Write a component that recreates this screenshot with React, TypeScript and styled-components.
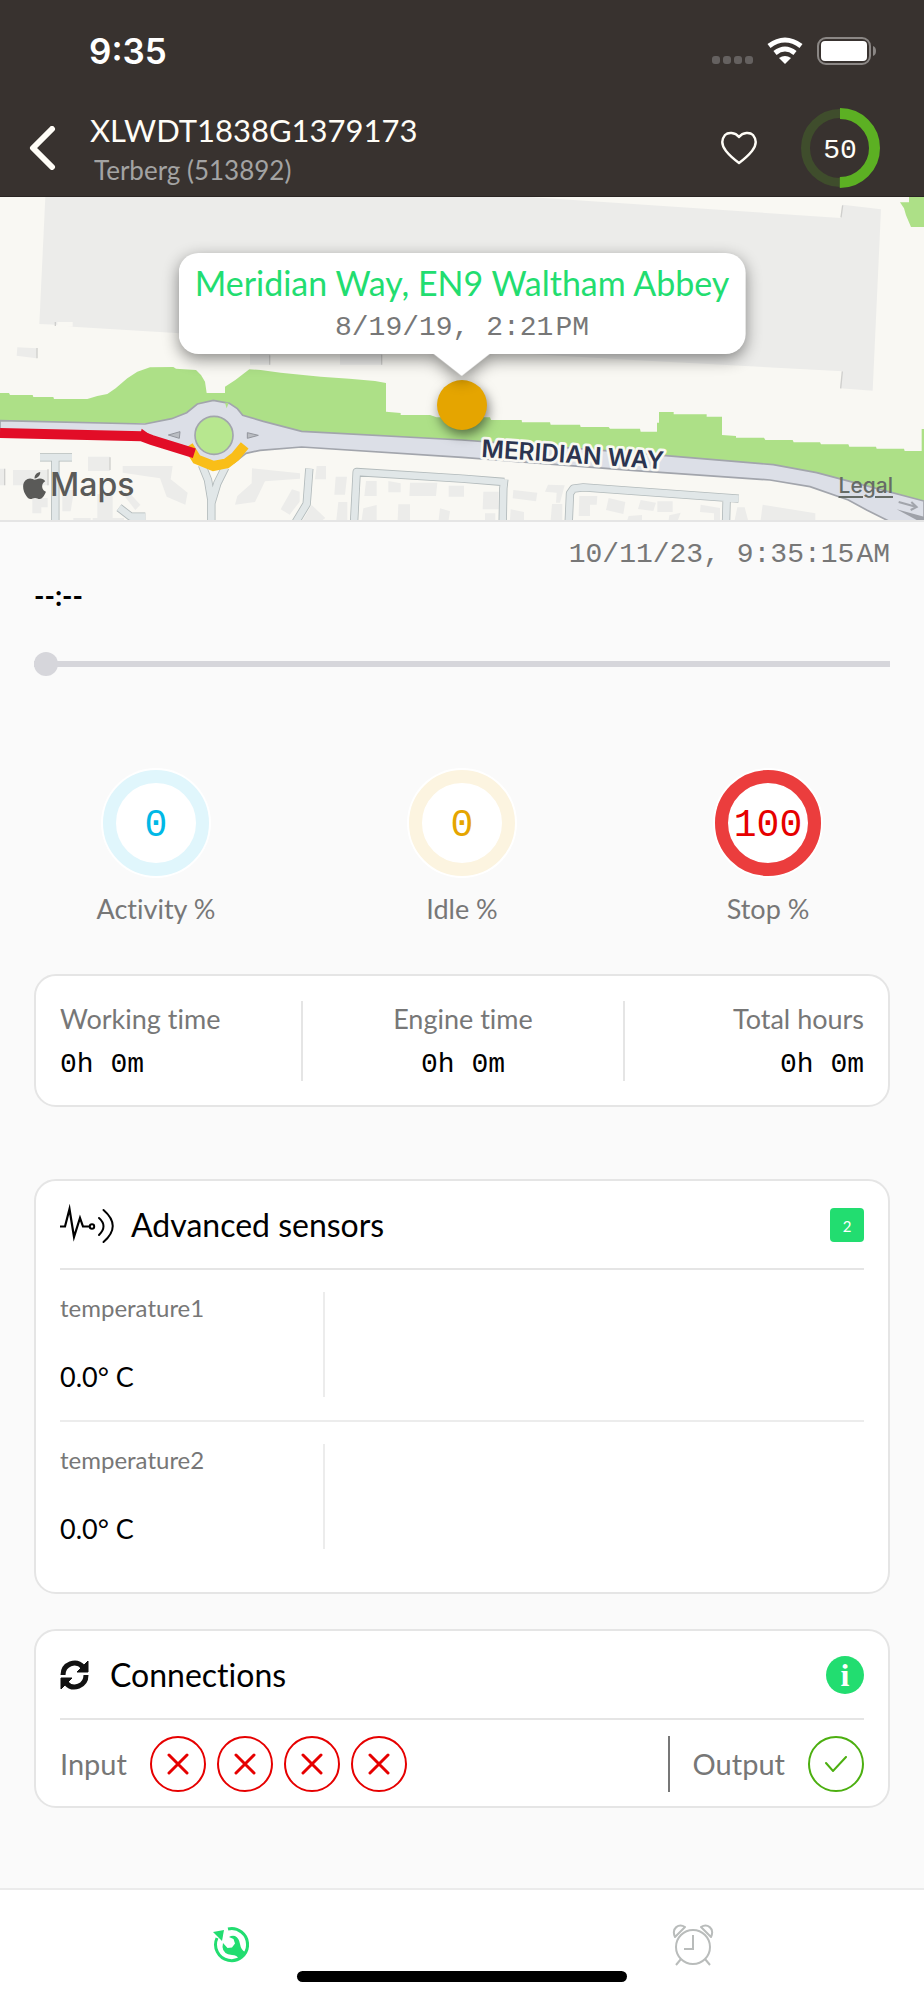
import React from "react";
import styled, { createGlobalStyle } from "styled-components";
import { FaApple } from "react-icons/fa";

const sans = `Lato, "Open Sans", sans-serif`;
const mono = `"Liberation Mono", monospace`;
const system = `Inter, Roboto, sans-serif`;

const c = {
  dark: "#38322f",
  page: "#fafafa",
  line: "#e5e5e5",
  soft: "#ececec",
  muted: "#777777",
  green: "#22dd70",
  red: "#e60000",
};

const GlobalStyle = createGlobalStyle`
  *, *::before, *::after { box-sizing: border-box; }
  html, body { margin: 0; background: ${c.page}; }
  body { font-family: ${sans}; color: #000; font-variant-ligatures: none; -webkit-font-smoothing: antialiased; }
  h1, h2, p, dl, dt, dd, ul { margin: 0; padding: 0; font-weight: 400; }
  button { border: 0; padding: 0; background: none; cursor: pointer; color: inherit; display: flex; align-items: center; justify-content: center; }
  svg { display: block; }
`;

const Page = styled.div`
  min-height: 100vh;
  display: flex;
  flex-direction: column;
`;

const Header = styled.header`
  background: ${c.dark};
  color: #fffdf7;
  border-bottom: 1px solid #2a2523;
`;

const StatusBar = styled.div`
  height: 102px;
  padding: 0 48px 0 89px;
  display: flex;
  align-items: center;
  justify-content: space-between;
  font: 600 35px/36px ${system};
  color: #fff;
`;

const StatusIcons = styled.div`
  display: flex;
  align-items: center;
  gap: 13px;
`;

const TitleBar = styled.div`
  height: 94px;
  display: flex;
  align-items: center;
  padding: 0 44px 2px 28px;
`;

const BackButton = styled.button`
  width: 28px;
  height: 48px;
`;

const Titles = styled.div`
  flex: 1;
  padding-left: 34px;
`;

const MachineName = styled.h1`
  font-size: 31px;
  line-height: 44px;
`;

const MachineModel = styled.p`
  font-size: 26px;
  line-height: 36px;
  padding-left: 4px;
  color: #a3a3a3;
`;

const FavoriteButton = styled.button`
  width: 40px;
  height: 48px;
  margin-right: 41px;
`;

const DialWrap = styled.div<{ $size: number }>`
  display: grid;
  place-items: center;
  width: ${(p) => p.$size}px;
  height: ${(p) => p.$size}px;
  > * { grid-area: 1 / 1; }
`;

const DialValue = styled.span<{ $color: string; $big?: boolean }>`
  font-family: ${mono};
  font-size: ${(p) => (p.$big ? 38 : 28)}px;
  line-height: 40px;
  padding-top: 6px;
  color: ${(p) => p.$color};
`;

const MapArea = styled.section`
  position: relative;
  height: 325px;
  border-bottom: 2px solid ${c.line};
  background: #f9f8f3;
  overflow: hidden;
`;

const MapCanvas = styled.svg`
  width: 100%;
  height: 100%;
`;

const Callout = styled.div`
  position: absolute;
  top: 56px;
  left: 50%;
  transform: translateX(-50%);
  height: 101px;
  padding: 6px 16px;
  border-radius: 20px;
  background: #fff;
  text-align: center;
  white-space: nowrap;
  filter: drop-shadow(0 5px 8px rgba(0, 0, 0, 0.45));
  &::after {
    content: "";
    position: absolute;
    top: 100%;
    left: 50%;
    margin-left: -28px;
    border: 28px solid transparent;
    border-top: 22px solid #fff;
    border-bottom: 0;
  }
`;

const Address = styled.p`
  font-size: 34px;
  line-height: 48px;
  color: ${c.green};
`;

const Stamp = styled.p`
  font-family: ${mono};
  font-size: 28px;
  line-height: 42px;
  color: ${c.muted};
`;

const Meridiem = styled.span`
  margin-left: 2px;
`;

const Pin = styled.span`
  position: absolute;
  top: 183px;
  left: 50%;
  width: 50px;
  height: 50px;
  margin-left: -25px;
  border-radius: 50%;
  background: #e5a500;
  box-shadow: 2px 5px 12px rgba(0, 0, 0, 0.5);
`;

const MapBrand = styled.div`
  position: absolute;
  left: 19px;
  bottom: 15px;
  display: flex;
  align-items: center;
  font: 500 32px/40px ${system};
  color: #5a5a58;
`;

const LegalLink = styled.a`
  position: absolute;
  right: 31px;
  bottom: 20px;
  font: 500 21px/28px ${system};
  color: #666b66;
  text-decoration: underline;
  text-decoration-thickness: 2px;
  text-underline-offset: 3px;
`;

const Main = styled.main`
  flex: 1;
  padding: 12px 34px 80px;
  display: flex;
  flex-direction: column;
`;

const CurrentTime = styled(Stamp)`
  text-align: right;
`;

const Elapsed = styled.label`
  font-size: 28px;
  font-weight: 700;
  line-height: 38px;
`;

const Slider = styled.input`
  appearance: none;
  width: 100%;
  height: 24px;
  margin: 38px 0 0;
  background: transparent;
  &::-webkit-slider-runnable-track {
    height: 6px;
    background: #d6d6db;
  }
  &::-webkit-slider-thumb {
    appearance: none;
    width: 24px;
    height: 24px;
    margin-top: -9px;
    border-radius: 50%;
    background: #d6d6db;
  }
`;

const Gauges = styled.section`
  display: flex;
  padding: 92px 0 0;
  margin: 0 -31px;
`;

const Gauge = styled.div`
  flex: 1;
  display: flex;
  flex-direction: column;
  align-items: center;
  gap: 13px;
`;

const Label = styled.span`
  font-size: 27px;
  line-height: 36px;
  color: ${c.muted};
`;

const Card = styled.section<{ $top: number; $bottom?: number }>`
  margin-top: ${(p) => p.$top}px;
  padding: 0 24px ${(p) => p.$bottom ?? 0}px;
  border: 2px solid ${c.line};
  border-radius: 22px;
  background: #fff;
`;

const Times = styled.dl`
  display: grid;
  grid-template-columns: 3fr 4fr 3fr;
  padding: 25px 0 24px;
`;

const TimeCell = styled.div<{ $align: string }>`
  text-align: ${(p) => p.$align};
  height: 80px;
  & + & { border-left: 2px solid ${c.line}; }
`;

const TimeLabel = styled.dt`
  font-size: 27px;
  line-height: 36px;
  color: ${c.muted};
`;

const TimeValue = styled.dd`
  font-family: ${mono};
  font-size: 28px;
  line-height: 32px;
  padding-top: 12px;
`;

const CardHeader = styled.header`
  height: 89px;
  display: flex;
  align-items: center;
  justify-content: space-between;
  border-bottom: 2px solid ${c.line};
`;

const CardTitle = styled.h2<{ $gap: number }>`
  display: flex;
  align-items: center;
  gap: ${(p) => p.$gap}px;
  font-size: 32px;
  line-height: 40px;
`;

const CountBadge = styled.span`
  width: 34px;
  height: 34px;
  border-radius: 4px;
  background: ${c.green};
  color: #fff;
  font: 15px/36px ${sans};
  text-align: center;
`;

const InfoButton = styled.button`
  && {
    width: 38px;
    height: 38px;
    border-radius: 50%;
    background: ${c.green};
    color: #fff;
    font: 700 32px/36px "Liberation Serif", serif;
  }
`;

const Sensor = styled.div`
  padding: 22px 0 23px;
  & + & { border-top: 2px solid ${c.soft}; }
`;

const SensorCell = styled.div`
  width: 33%;
  height: 105px;
  display: flex;
  flex-direction: column;
  justify-content: space-between;
  border-right: 2px solid ${c.soft};
`;

const SensorName = styled.span`
  font-size: 24px;
  line-height: 32px;
  color: ${c.muted};
`;

const SensorValue = styled.span`
  font-size: 27px;
  line-height: 40px;
`;

const Connections = styled.div`
  display: flex;
  justify-content: space-between;
  padding: 16px 0 14px;
`;

const Group = styled.div<{ $ruled?: boolean }>`
  display: flex;
  align-items: center;
  gap: 23px;
  ${(p) => p.$ruled && `border-left: 2px solid ${c.muted}; padding-left: 23px;`}
`;

const GroupLabel = styled.span`
  font-size: 29px;
  line-height: 40px;
  color: ${c.muted};
`;

const Pins = styled.ul`
  display: flex;
  gap: 11px;
  list-style: none;
`;

const PinState = styled.li<{ $on?: boolean }>`
  width: 56px;
  height: 56px;
  display: grid;
  place-items: center;
  border: 2px solid ${(p) => (p.$on ? "#4caf10" : c.red)};
  border-radius: 50%;
  color: ${(p) => (p.$on ? "#4caf10" : c.red)};
`;

const TabBar = styled.nav`
  position: relative;
  height: 112px;
  display: flex;
  border-top: 2px solid #ebebeb;
  background: #fff;
`;

const Tab = styled.button`
  flex: 1;
`;

const HomeIndicator = styled.span`
  position: absolute;
  bottom: 18px;
  left: 50%;
  width: 330px;
  height: 11px;
  margin-left: -165px;
  border-radius: 6px;
  background: #000;
`;

function Dial({ value, color, track, size, stroke, big, fill, ring }: {
  value: number; color: string; track: string; size: number; stroke: number; big?: boolean; fill?: string; ring: string;
}) {
  const mid = size / 2;
  const r = mid - stroke / 2 - (big ? 2 : 0);
  const length = 2 * Math.PI * r;
  return (
    <DialWrap $size={size}>
      <svg width={size} height={size} aria-hidden="true">
        {fill && <circle cx={mid} cy={mid} r={mid} fill={fill} />}
        <circle cx={mid} cy={mid} r={r} fill="none" stroke={track} strokeWidth={big ? stroke : stroke - 2} />
        {value > 0 && (
          <circle cx={mid} cy={mid} r={r} fill="none" stroke={ring} strokeWidth={stroke}
            strokeDasharray={`${(length * value) / 100} ${length}`} transform={`rotate(-90 ${mid} ${mid})`} />
        )}
      </svg>
      <DialValue $color={color} $big={big}>{value}</DialValue>
    </DialWrap>
  );
}

/* Map units are thirds of a pixel. */
function StreetMap() {
  return (
    <MapCanvas viewBox="0 21 2772 969" preserveAspectRatio="xMidYMid slice" aria-hidden="true">
      <g fill="#ececea">
        <path d="M136 21H1586L2522 84L2528 44L2643 58L2618 602L2520 595L2528 544L1900 510L540 430L218 410L170 404L118 402Z" />
        <path d="M52 472L112 475L110 505L50 497ZM750 490H810V524H750ZM1020 490H1146V524H1020Z" />
        <path d="M264 800H330V843H264ZM368 828H518L512 868L563 908L556 944L500 920L480 865L368 848ZM97 924H143V952H124V970H97ZM0 836H14V886H0ZM39 840H145V886H39ZM187 900H222L212 964H187ZM292 912H338V984H292ZM385 905L421 944L406 960L375 920ZM220 984H272V990H220ZM278 984H372V990H278Z" />
        <path d="M756 835L900 850V866L795 874L765 936L705 944L712 918L755 880ZM876 898L899 905V935L869 974L842 958ZM935 945L976 984L968 990H908ZM950 828H978V868H945ZM1007 860H1041L1035 914H1003ZM1015 936H1042V990H1009ZM1098 873H1130V918H1093ZM1090 955L1130 945V990H1085ZM1165 873L1202 880V907H1165ZM1230 878H1312L1308 918H1228ZM1195 943H1230V990H1193ZM1346 887H1392V920H1346ZM1320 955L1350 964L1346 990H1316Z" />
        <path d="M1450 905H1496V958H1448ZM1455 970H1486V990H1455ZM1540 900L1612 908L1608 934L1538 925ZM1532 958L1572 966V990H1530ZM1644 884L1694 886L1680 938H1668L1670 908L1635 905ZM1656 942H1687V990H1652ZM1738 918H1792L1790 944H1770V978H1736ZM1826 924L1876 936L1870 972L1818 960ZM1922 930L1968 938L1960 963L1914 957ZM1972 934H2018V966H1972ZM1886 978L1926 975V990H1882ZM2008 976L2042 968L2034 990H2006ZM2102 944L2160 954V990H2142V970L2100 966ZM2212 952H2234L2244 990H2204ZM2288 944L2446 970V990H2282Z" />
      </g>
      <g stroke="#cfcfcd" strokeWidth="4" fill="none">
        <path d="M2528 46L2523 82M2527 544L2522 595M166 396V408M111 474V505M809 496V524M1145 494V524M14 836V886M144 838V886M330 802V840" />
      </g>
      <rect x="172" y="396" width="46" height="14" fill="#f9f8f3" />

      <g fill="#ade087">
        <path d="M0 609H27L30 615H98L100 621H160L162 627H230L262 627L292 618L322 612L347 595L382 565L412 545L450 532L520 531L528 536L588 540L603 555L615 575L620 609H675V590L706 570L748 538L782 540L842 548L962 560L1048 566L1125 573L1158 579V665L1202 669V675H1290L1310 682H1470L1473 690H1565L1566 697H1650L1652 704H1740L1742 711H1826L1830 716H1920L1922 725H1971V698H1977V666H2021V673H2120V680H2166V735L2208 738V743H2292L2296 750H2378L2381 757H2460L2463 763H2545L2548 770H2628L2630 776H2712L2714 783H2765V717H2772V950L2500 870L2300 830L1800 800L1386 760L900 740L700 700H0Z" />
        <path d="M2727 21H2772V111H2733L2718 76L2712 55L2700 37H2727Z" />
      </g>

      <g fill="none" strokeLinejoin="round">
        {[["#b2babb", 25], ["#e1e7e8", 20]].map(([stroke, width]) => (
          <g key={stroke} stroke={stroke as string} strokeWidth={width as number}>
            <path d="M120 802H216M166 802V1000M606 825L624 870L634 930V1000M676 832L652 880L634 940M357 953L392 980H436M928 836L920 942L885 1000M1386 866L1070 846L1062 1000M1386 866L1513 876M1513 868L1510 895L1508 1000M2216 926L1750 892L1720 896L1710 910L1706 1000M2180 925L2178 1000" />
          </g>
        ))}
      </g>

      <path
        d="M0 692L435 702L515 686L560 668L592 642L640 631L688 640L712 656L728 676L790 694L905 724L1386 750L1845 784L2320 824L2450 848L2620 893L2772 933V1000H2680L2600 960L2545 930L2430 890L2310 870L1905 842L1386 802L905 771L780 781L738 790L700 820L640 830L580 805L540 775L435 745L0 735Z"
        fill="#dcdfe7" stroke="#a2a5ac" strokeWidth="5"
      />
      <circle cx="642" cy="736" r="57" fill="#b7e78f" stroke="#a2a5ac" strokeWidth="5" />
      <path d="M675 638H686L680 655Z" fill="#ade087" />
      <path d="M505 735L540 725L538 745ZM775 736L742 728V745Z" fill="#babdc2" stroke="#92959c" strokeWidth="3" />
      <path d="M565 768L590 808L640 828L680 820L706 800L734 766" fill="none" stroke="#f9be18" strokeWidth="30" />
      <path d="M0 729L425 739L455 750L583 790" fill="none" stroke="#e20d27" strokeWidth="30" />
      <path d="M425 716L455 738H420Z" fill="#e20d27" />
      <path d="M2696 936L2750 951M2734 936L2750 951L2732 960" fill="none" stroke="#a2a5ac" strokeWidth="6" />
      <path d="M2690 958L2772 980V990H2750Z" fill="#9ea1a8" />

      <text transform="translate(1443 801) rotate(3.8)" fontFamily={system} fontSize="73" fontWeight="600"
        fill="#2b3450" stroke="#f9f8f3" strokeWidth="16" strokeLinejoin="round" paintOrder="stroke">
        MERIDIAN WAY
      </text>
    </MapCanvas>
  );
}

function CrossIcon() {
  return (
    <svg width="22" height="22" viewBox="0 0 22 22" aria-label="off" role="img">
      <path d="M2 2L20 20M20 2L2 20" stroke="currentColor" strokeWidth="3" strokeLinecap="round" />
    </svg>
  );
}

const gauges = [
  { label: "Activity %", value: 0, color: "#00b8e6", track: "#e0f6fc", ring: "#00b8e6" },
  { label: "Idle %", value: 0, color: "#e5a500", track: "#fcf4e0", ring: "#e5a500" },
  { label: "Stop %", value: 100, color: "#e60000", track: "#fce0e0", ring: "#eb3d3d" },
];

const times = [
  { label: "Working time", align: "left" },
  { label: "Engine time", align: "center" },
  { label: "Total hours", align: "right" },
];

export default function App() {
  return (
    <Page>
      <GlobalStyle />
      <Header>
        <StatusBar>
          <span>9:35</span>
          <StatusIcons aria-hidden="true">
            <svg width="42" height="28" fill="#656160">
              {[0, 11, 22, 33].map((x) => <rect key={x} x={x} y="19" width="8" height="8" rx="3" />)}
            </svg>
            <svg width="36" height="28" viewBox="0 0 36 28" fill="none" stroke="#fff" strokeWidth="5">
              <path d="M2 9Q18 -3 34 9" />
              <path d="M8 16Q18 8 28 16" />
              <path d="M12 21Q18 17 24 21L18 27Z" fill="#fff" stroke="none" />
            </svg>
            <svg width="60" height="28" viewBox="0 0 60 28">
              <rect x="2" y="1" width="52" height="26" rx="8" fill="none" stroke="#8b8785" strokeWidth="2" />
              <rect x="5" y="4" width="46" height="20" rx="4" fill="#fff" />
              <path d="M57 9Q60 10 60 14Q60 18 57 19Z" fill="#8b8785" />
            </svg>
          </StatusIcons>
        </StatusBar>
        <TitleBar>
          <BackButton aria-label="Back">
            <svg width="28" height="44" viewBox="0 0 28 44" fill="none" stroke="currentColor" strokeWidth="6" strokeLinecap="round" strokeLinejoin="round">
              <path d="M24 3L5 22L24 41" />
            </svg>
          </BackButton>
          <Titles>
            <MachineName>XLWDT1838G1379173</MachineName>
            <MachineModel>Terberg (513892)</MachineModel>
          </Titles>
          <FavoriteButton aria-label="Favorite">
            <svg width="36" height="34" viewBox="0 0 36 34" fill="none" stroke="currentColor" strokeWidth="2.4" strokeLinejoin="round">
              <path d="M18 6C14 1 7 1 4 4C0 9 1 15 5 20C9 25 14 29 18 32C22 29 27 25 31 20C35 15 36 9 32 4C29 1 22 1 18 6Z" />
            </svg>
          </FavoriteButton>
          <Dial value={50} color="#fffdf7" track="#3f4d2c" ring="#5cb023" size={80} stroke={11} />
        </TitleBar>
      </Header>

      <MapArea aria-label="Machine location">
        <StreetMap />
        <Pin />
        <Callout>
          <Address>Meridian Way, EN9 Waltham Abbey</Address>
          <Stamp>8/19/19, 2:21<Meridiem>PM</Meridiem></Stamp>
        </Callout>
        <MapBrand><FaApple size={31} />Maps</MapBrand>
        <LegalLink href="#legal">Legal</LegalLink>
      </MapArea>

      <Main>
        <CurrentTime>10/11/23, 9:35:15<Meridiem>AM</Meridiem></CurrentTime>
        <Elapsed htmlFor="timeline">--:--</Elapsed>
        <Slider id="timeline" type="range" min="0" max="100" defaultValue="0" />

        <Gauges>
          {gauges.map(({ label, ...dial }) => (
            <Gauge key={label}>
              <Dial {...dial} size={110} stroke={13} big fill="#fff" />
              <Label>{label}</Label>
            </Gauge>
          ))}
        </Gauges>

        <Card $top={47}>
          <Times>
            {times.map((t) => (
              <TimeCell key={t.label} $align={t.align}>
                <TimeLabel>{t.label}</TimeLabel>
                <TimeValue>0h 0m</TimeValue>
              </TimeCell>
            ))}
          </Times>
        </Card>

        <Card $top={72} $bottom={20}>
          <CardHeader>
            <CardTitle $gap={16}>
              <svg width="55" height="42" viewBox="0 0 55 42" fill="none" stroke="#000" strokeWidth="2" aria-hidden="true">
                <path d="M0 22.5H5L9.5 5L14 33L20 14L23 22.5H29.5" strokeMiterlimit="12" strokeWidth="2.2" />
                <circle cx="32" cy="22.5" r="2.2" />
                <path d="M39 14Q48 22 39 31" strokeLinecap="round" />
                <path d="M43.5 6Q62 22 43.5 38" strokeLinecap="round" />
              </svg>
              Advanced sensors
            </CardTitle>
            <CountBadge>2</CountBadge>
          </CardHeader>
          {["temperature1", "temperature2"].map((name) => (
            <Sensor key={name}>
              <SensorCell>
                <SensorName>{name}</SensorName>
                <SensorValue>0.0° C</SensorValue>
              </SensorCell>
            </Sensor>
          ))}
        </Card>

        <Card $top={35}>
          <CardHeader>
            <CardTitle $gap={21}>
              <svg width="29" height="30" viewBox="0 0 29 30" aria-hidden="true">
                <path d="M3 15C3 4 16 -1 23 7M26 15C26 26 13 31 6 23" fill="none" stroke="#111" strokeWidth="5" />
                <path d="M28 1V12H17ZM1 29V18H12Z" fill="#111" stroke="#111" />
              </svg>
              Connections
            </CardTitle>
            <InfoButton aria-label="Connection details">i</InfoButton>
          </CardHeader>
          <Connections>
            <Group>
              <GroupLabel>Input</GroupLabel>
              <Pins>
                {[1, 2, 3, 4].map((n) => <PinState key={n}><CrossIcon /></PinState>)}
              </Pins>
            </Group>
            <Group $ruled>
              <GroupLabel>Output</GroupLabel>
              <Pins>
                <PinState $on>
                  <svg width="22" height="16" viewBox="0 0 22 16" role="img" aria-label="on">
                    <path d="M1 7L8 15L21 1" fill="none" stroke="currentColor" strokeWidth="2" strokeLinecap="round" />
                  </svg>
                </PinState>
              </Pins>
            </Group>
          </Connections>
        </Card>
      </Main>

      <TabBar>
        <Tab aria-label="Service">
          <svg width="36" height="38" viewBox="0 0 36 38" fill={c.green}>
            <path d="M15 3A16 16 0 1 1 4 12" fill="none" stroke={c.green} strokeWidth="3" />
            <path d="M0 6L11 4L9 15Z" />
            <path d="M16 11Q19 9 22 10Q26 12 27 18Q28 24 32 26L26 33Q24 29 19 29Q10 28 9.500 21L10 17L14.500 22L19 21.500L22 17.500L20.500 13Z" />
          </svg>
        </Tab>
        <Tab aria-label="Alarms">
          <svg width="42" height="42" viewBox="0 0 42 42" fill="none" stroke="#b9bcbb" strokeWidth="2">
            <circle cx="21" cy="23" r="17" />
            <path d="M21 11V25H12M9 35L4 41M33 35L38 41" />
            <path d="M3 13C-1 4 7 -1 13 3ZM39 13C43 4 35 -1 29 3Z" strokeLinejoin="round" />
          </svg>
        </Tab>
        <HomeIndicator />
      </TabBar>
    </Page>
  );
}
